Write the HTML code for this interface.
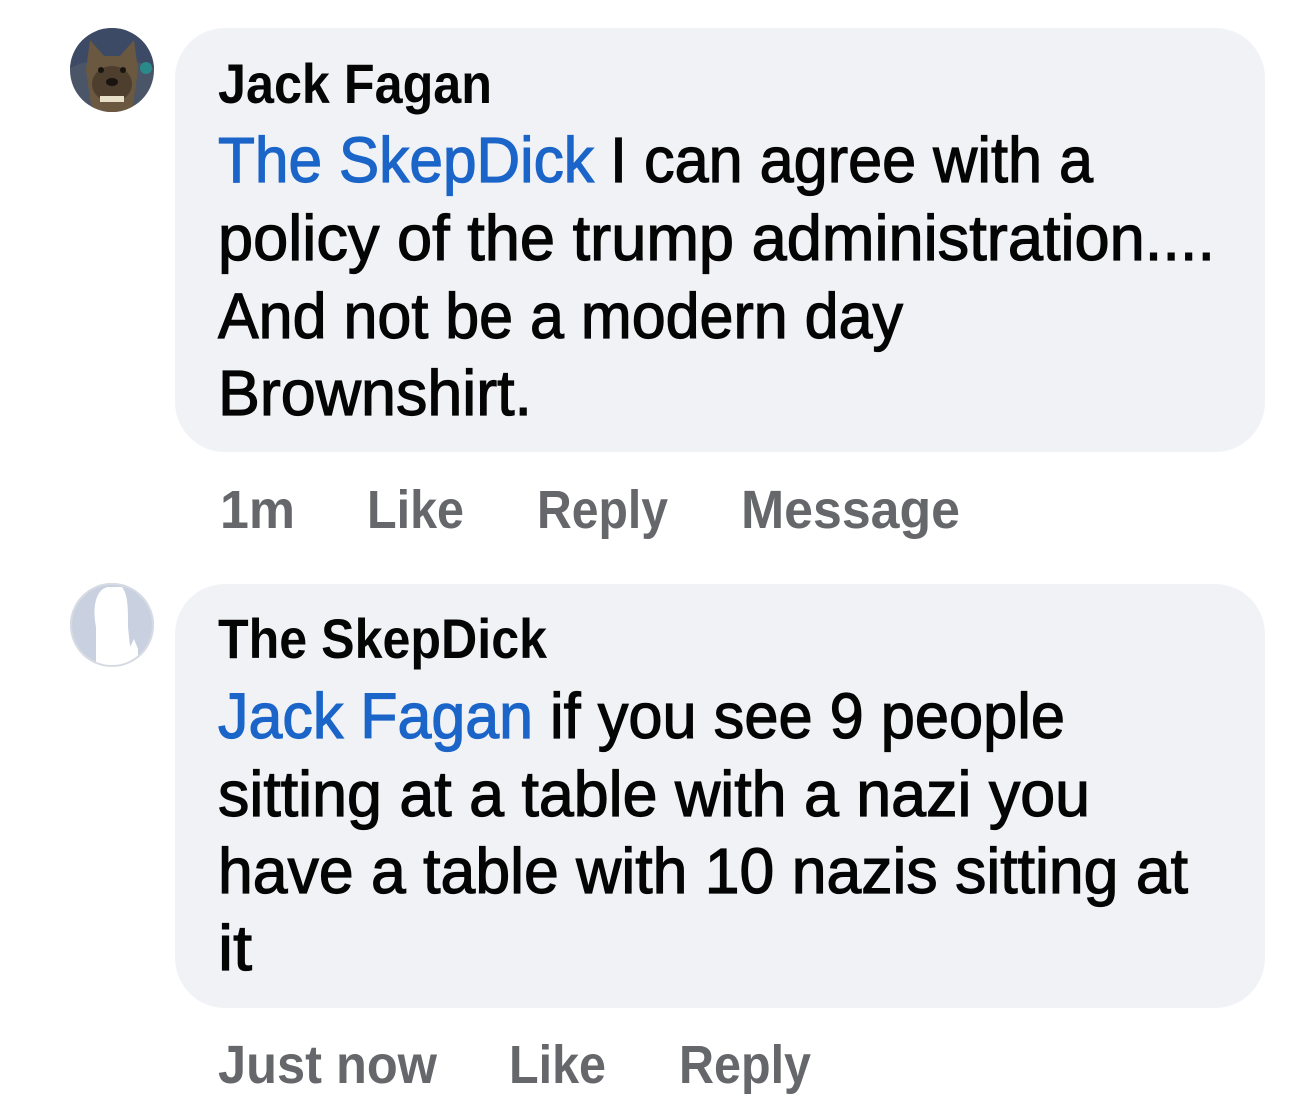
<!DOCTYPE html>
<html><head><meta charset="utf-8"><style>
html,body{margin:0;padding:0;background:#fff;width:1307px;height:1114px;overflow:hidden}
svg{display:block}
text{font-family:"Liberation Sans",Arial,sans-serif}
.n{font-weight:bold;font-size:56px;fill:#050505}
.b{font-size:64px;fill:#050505;stroke:#050505;stroke-width:1.2}
.l{fill:#1b65c9;stroke:#1b65c9}
.a{font-weight:bold;font-size:54px;fill:#65676b}
</style></head><body>
<svg width="1307" height="1114" viewBox="0 0 1307 1114">
<defs>
<clipPath id="c1"><circle cx="112" cy="70" r="42"/></clipPath>
<clipPath id="c2"><circle cx="112" cy="625" r="42"/></clipPath>
</defs>
<g clip-path="url(#c1)">
<rect x="70" y="28" width="84" height="84" fill="#4a5568"/>
<path d="M70 28h84v40c-10-5-20-8-42-8s-32 3-42 8z" fill="#3d4a66"/>
<path d="M86 70l4-30 14 16h16l14-16 4 30-6 42h-40z" fill="#6b5840"/>
<ellipse cx="112" cy="84" rx="20" ry="18" fill="#4d3e2e"/>
<circle cx="101" cy="70" r="3" fill="#1a1410"/>
<circle cx="123" cy="70" r="3" fill="#1a1410"/>
<ellipse cx="112" cy="82" rx="6" ry="4" fill="#1a1410"/>
<rect x="100" y="96" width="24" height="6" fill="#e8e0c8"/>
<circle cx="146" cy="68" r="6" fill="#2a8a8a"/>
</g>
<g clip-path="url(#c2)">
<rect x="70" y="583" width="84" height="84" fill="#c9d1e0"/>
<path d="M96 667v-40c-4-20 0-38 12-40h14c6 8 6 20 6 40l2 20 4-8 4 10v18z" fill="#fff"/>
<path d="M70 650a42 42 0 0 0 84 0v17h-84z" fill="#eceef1"/>
</g>
<circle cx="112" cy="625" r="41" fill="none" stroke="#d6dbe3" stroke-width="2"/>
<rect x="175" y="28" width="1090" height="424" rx="50" fill="#f0f2f5"/>
<rect x="175" y="584" width="1090" height="424" rx="50" fill="#f0f2f5"/>
<text class="n" x="218" y="103" textLength="274" lengthAdjust="spacingAndGlyphs">Jack Fagan</text>
<text class="b l" x="218" y="182" textLength="376" lengthAdjust="spacingAndGlyphs">The SkepDick</text>
<text class="b" x="610" y="182" textLength="483" lengthAdjust="spacingAndGlyphs">I can agree with a</text>
<text class="b" x="218" y="260" textLength="997" lengthAdjust="spacingAndGlyphs">policy of the trump administration....</text>
<text class="b" x="218" y="338" textLength="685" lengthAdjust="spacingAndGlyphs">And not be a modern day</text>
<text class="b" x="218" y="415" textLength="314" lengthAdjust="spacingAndGlyphs">Brownshirt.</text>
<text class="a" x="220" y="528" textLength="75" lengthAdjust="spacingAndGlyphs">1m</text>
<text class="a" x="367" y="528" textLength="97" lengthAdjust="spacingAndGlyphs">Like</text>
<text class="a" x="537" y="528" textLength="131" lengthAdjust="spacingAndGlyphs">Reply</text>
<text class="a" x="741" y="528" textLength="219" lengthAdjust="spacingAndGlyphs">Message</text>
<text class="n" x="218" y="658" textLength="329" lengthAdjust="spacingAndGlyphs">The SkepDick</text>
<text class="b l" x="218" y="738" textLength="315" lengthAdjust="spacingAndGlyphs">Jack Fagan</text>
<text class="b" x="550" y="738" textLength="515" lengthAdjust="spacingAndGlyphs">if you see 9 people</text>
<text class="b" x="218" y="816" textLength="872" lengthAdjust="spacingAndGlyphs">sitting at a table with a nazi you</text>
<text class="b" x="218" y="893" textLength="970" lengthAdjust="spacingAndGlyphs">have a table with 10 nazis sitting at</text>
<text class="b" x="218" y="970" textLength="34" lengthAdjust="spacingAndGlyphs">it</text>
<text class="a" x="218" y="1083" textLength="219" lengthAdjust="spacingAndGlyphs">Just now</text>
<text class="a" x="509" y="1083" textLength="97" lengthAdjust="spacingAndGlyphs">Like</text>
<text class="a" x="679" y="1083" textLength="132" lengthAdjust="spacingAndGlyphs">Reply</text>
</svg>
</body></html>
